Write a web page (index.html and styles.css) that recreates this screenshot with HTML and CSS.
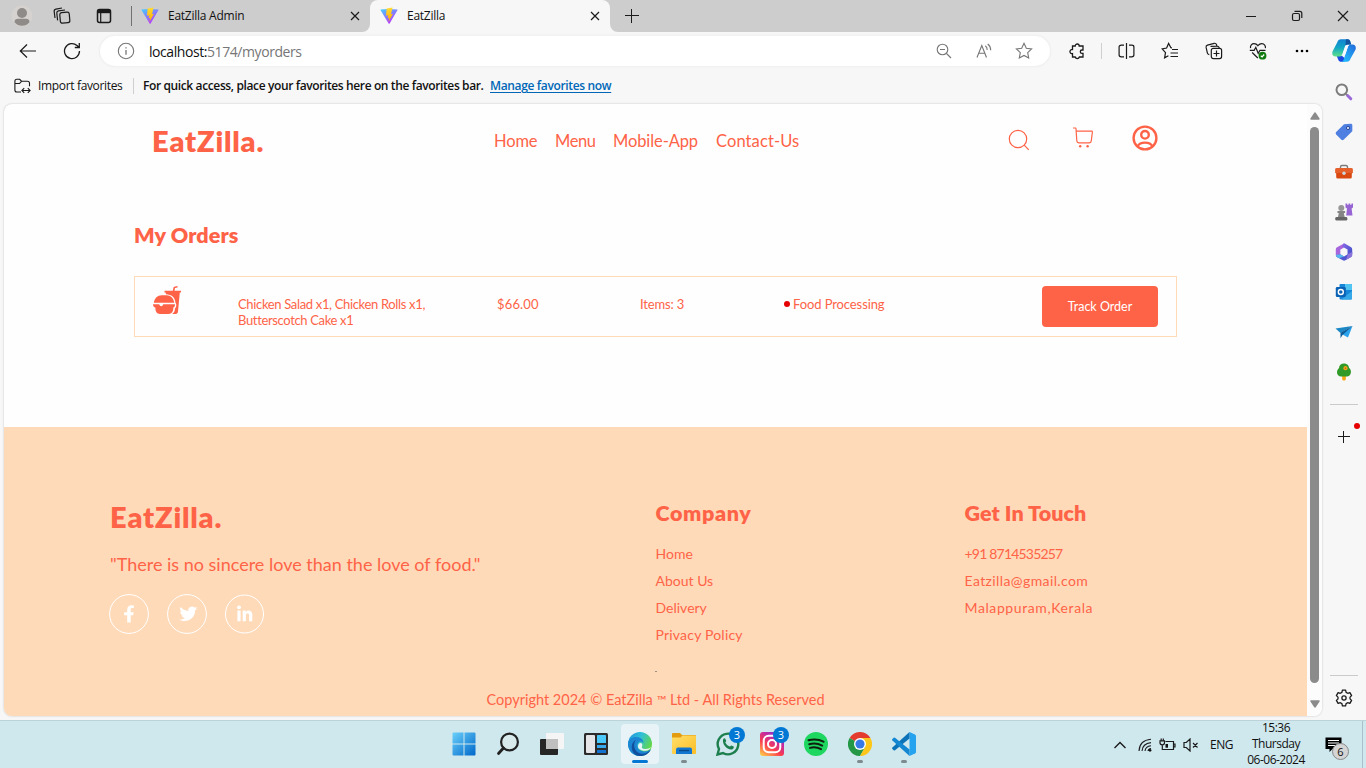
FILE: index.html
```html
<!DOCTYPE html>
<html lang="en">
<head>
<meta charset="utf-8">
<title>EatZilla</title>
<link rel="stylesheet" href="styles.css">
</head>
<body>
<svg class="defs" width="0" height="0">
  <defs>
    <linearGradient id="vb" x1="0" y1="0" x2=".6" y2="1"><stop offset="0" stop-color="#41d1ff"/><stop offset="1" stop-color="#bd34fe"/></linearGradient>
    <linearGradient id="vy" x1="0" y1="0" x2="0" y2="1"><stop offset="0" stop-color="#ffdd35"/><stop offset="1" stop-color="#ffa800"/></linearGradient>
    <linearGradient id="win" x1="0" y1="0" x2="1" y2="1"><stop offset="0" stop-color="#6ad0fb"/><stop offset="1" stop-color="#0067c9"/></linearGradient>
    <linearGradient id="cpa" x1="0" y1="0" x2="0" y2="1"><stop offset="0" stop-color="#1183d3"/><stop offset=".5" stop-color="#12a7c4"/><stop offset="1" stop-color="#5fe08a"/></linearGradient>
    <linearGradient id="cpb" x1="1" y1="0" x2="0" y2="1"><stop offset="0" stop-color="#2168d8"/><stop offset=".6" stop-color="#23a3f3"/><stop offset="1" stop-color="#20c0ff"/></linearGradient>
    <linearGradient id="ig" x1="0.1" y1="1" x2=".8" y2="0"><stop offset="0" stop-color="#ffc94a"/><stop offset=".4" stop-color="#fb3d4e"/><stop offset=".7" stop-color="#c32aa3"/><stop offset="1" stop-color="#6a3be0"/></linearGradient>
    <linearGradient id="edg" x1="0" y1="0" x2="1" y2=".5"><stop offset="0" stop-color="#1c8fdc"/><stop offset=".5" stop-color="#2fc0d8"/><stop offset="1" stop-color="#63d845"/></linearGradient>
    <linearGradient id="fold" x1="0" y1="0" x2="1" y2="1"><stop offset="0" stop-color="#ffdf6b"/><stop offset="1" stop-color="#fbbd25"/></linearGradient>
    <linearGradient id="m1" x1="0" y1="0" x2="1" y2="1"><stop offset="0" stop-color="#8a6be8"/><stop offset="1" stop-color="#3a4bc4"/></linearGradient>
    <symbol id="vite" viewBox="0 0 18 18"><path d="M.8 2.600 8.200 2l9 .6a.5.5 0 0 1 .2.7L9.600 16.600a.6.6 0 0 1-1 0L.6 3.200a.4.4 0 0 1 .2-.6z" fill="url(#vb)"/><path d="M12.600.400 6.600 1.500l-.6 7.200 2.200-.4-.6 3 1.600-.3-.8 4 4.600-8.200-2 .4z" fill="url(#vy)"/></symbol>
  </defs>
</svg>

<header class="tabs">
  <div class="tabs-left">
    <svg width="22" height="22" viewBox="0 0 22 22"><circle cx="11" cy="11" r="10.600" fill="#d5d2cf"/><circle cx="11" cy="8" r="5" fill="#8e8b88"/><path d="M3.500 17.300c0-2.800 1.500-3.500 3.500-3.500h8c2 0 3.500.7 3.500 3.500-2 2.500-4.500 3.500-7.500 3.500s-5.500-1-7.500-3.500z" fill="#8e8b88"/></svg>
    <svg width="18" height="18" viewBox="0 0 18 18" class="ln"><rect x="7" y="5.500" width="9.500" height="10.500" rx="2" transform="rotate(-5 11 10)"/><path d="M4.600 13.400 3.800 6c-.1-1.200.5-2 1.700-2.200L12 3M2 11 1.200 4.600C1 3.400 1.700 2.500 3 2.200L9 1"/></svg>
    <svg width="16" height="16" viewBox="0 0 16 16" class="ln"><rect x="1.500" y="1.500" width="13" height="13" rx="2" stroke-width="1.500"/><path d="M1.500 3.500h13" stroke-width="3.400"/><path d="M4.700 5v9"/></svg>
    <i class="bar"></i>
  </div>
  <div class="tab old"><svg width="18" height="18"><use href="#vite"/></svg><span>EatZilla Admin</span><svg width="10" height="10" viewBox="0 0 10 10" class="ln x"><path d="m1 1 8 8m0-8L1 9"/></svg></div>
  <div class="tab on"><svg width="18" height="18"><use href="#vite"/></svg><span>EatZilla</span><svg width="10" height="10" viewBox="0 0 10 10" class="ln x"><path d="m1 1 8 8m0-8L1 9"/></svg></div>
  <div class="rest"><svg width="14" height="14" viewBox="0 0 14 14" class="ln crisp"><path d="M6.500 0v14M0 6.500h14"/></svg>
    <div class="wins">
      <svg width="46" height="12" viewBox="0 0 46 12" class="ln"><path d="M18 6.500h10" stroke-width="1"/></svg>
      <svg width="46" height="12" viewBox="0 0 46 12" class="ln"><rect x="18.500" y="3.500" width="7" height="7" rx="1.500"/><path d="M20.500 1.300h5.300c1.200 0 2 .8 2 2V8"/></svg>
      <svg width="46" height="12" viewBox="0 0 46 12" class="ln"><path d="m18 1 10 10m0-10L18 11"/></svg>
    </div>
  </div>
</header>

<div class="middle">
  <div class="left">
    <div class="toolbar">
      <div class="c44"><svg width="18" height="16" viewBox="0 0 18 16" class="ln"><path d="M17 8H1.500M8 1.500 1.300 8 8 14.500"/></svg></div>
      <div class="c44"><svg width="18" height="18" viewBox="0 0 18 18" class="ln"><path d="M16.500 9A7.500 7.500 0 1 1 14 3.500L16 5.300M16.300 1v4.500h-4.500" stroke-width="1.300"/></svg></div>
      <div class="url">
        <svg width="18" height="18" viewBox="0 0 18 18" class="gr"><circle cx="9" cy="9" r="7.700"/><path d="M9 8v4.700M9 5.200v1.300" stroke-width="1.300"/></svg>
        <p class="addr"><b>localhost:</b>5174/myorders</p>
        <div class="c40"><svg width="16" height="16" viewBox="0 0 16 16" class="gr"><circle cx="6.500" cy="6.500" r="5.300"/><path d="M4 6.500h5M10.500 10.500 15 15"/></svg></div>
        <div class="c40"><svg width="17" height="16" viewBox="0 0 17 16" class="gr"><path d="M1 14.500 5.800 2.500l4.700 12M2.800 10.300h6M9.300 2.700c1.300 1 1.900 2.400 1.900 4.300M11.700 1c2 1.500 3 3.500 3 6.200"/></svg></div>
        <div class="c40"><svg width="18" height="18" viewBox="0 0 18 18" class="gr"><path d="m9 1.300 2.300 4.900 5.300.7-3.900 3.700 1 5.400L9 13.400 4.300 16l1-5.400L1.400 6.900l5.300-.7z"/></svg></div>
      </div>
      <div class="c44"><svg width="18" height="18" viewBox="0 0 18 18" class="ln"><path d="M4.500 4h2.700a2 2 0 1 1 4 0H15v4h-1a1.700 1.700 0 0 0 0 3.400h1V15h-3.600a2.200 2.200 0 0 1-4.200 0H4.500v-3.400A2.100 2.100 0 1 1 4.500 7.500z" stroke-width="1.300"/></svg></div>
      <i class="vsep"></i>
      <div class="c44"><svg width="17" height="16" viewBox="0 0 17 16" class="ln"><path d="M8.500 0v16M6 2.200H3.300c-1.500 0-2.200.7-2.200 1.700v8.200c0 1 .7 1.700 2.200 1.700H6M11 2.200h2.700c1.500 0 2.200.7 2.200 1.700v8.200c0 1-.7 1.700-2.200 1.700H11"/></svg></div>
      <div class="c44"><svg width="18" height="18" viewBox="0 0 18 18" class="ln"><path d="M11 5.800 9.900 5.700 7.600 1.400 5.600 6 1.200 6.900l3.300 3.700-.9 5.300 3.800-2.100M11 7.500h6M9.500 11H17M9.500 14.500H17"/></svg></div>
      <div class="c44"><svg width="18" height="18" viewBox="0 0 18 18" class="ln"><rect x="6.300" y="6.300" width="10.300" height="10.300" rx="2"/><path d="M11.500 8.500v6M8.500 11.500h6M4.300 12.600c-1-.1-1.600-.5-1.900-1.500L1.100 5.400C.9 4.200 1.400 3.400 2.500 3.100l6.700-1.800c1.200-.2 2 .3 2.300 1.400l.4 1.500M5.500 4.300l6.400-.1c1.500 0 2.200.6 2.400 2"/></svg></div>
      <div class="c44"><svg width="18" height="18" viewBox="0 0 18 18" class="ln"><path d="M1.500 6.200C1 3.500 3 1.700 5 1.700c1.700 0 3 .8 3.900 2 1-1.200 2.300-2 4-2 2.300 0 4 2 3.500 4.500M.8 8.300h4.400l1.600-3 2.400 6L11 8.300h5.500M3.200 10.500 8.800 16"/><circle cx="13.500" cy="13.700" r="3.900" fill="#107c10" stroke="none"/><path d="m11.800 13.800 1.300 1.200 2.100-2.500" stroke="#fff"/></svg></div>
      <div class="c44"><svg width="14" height="4" viewBox="0 0 14 4"><circle cx="2" cy="2" r="1.300"/><circle cx="7" cy="2" r="1.300"/><circle cx="12" cy="2" r="1.300"/></svg></div>
    </div>
    <div class="favs">
      <svg width="17" height="16" viewBox="0 0 17 16" class="ln"><path d="M7 14H2.800c-1.200 0-1.900-.8-1.900-2V3.300c0-1.300.7-2 1.900-2h2.900l1.800 1.900h6c1.200 0 2 .8 2 2v3M1 5.500h4.500l2-2.200M8.500 12.500h7.500M10.200 10.200l-2.300 2.300 2.300 2.300M13.800 10.200l2.300 2.300-2.300 2.300" stroke-width="1.100"/></svg>
      <span class="imp">Import favorites</span><i class="vsep"></i>
      <span class="quick">For quick access, place your favorites here on the favorites bar.</span>
      <a class="manage">Manage favorites now</a>
    </div>

    <div class="view">
      <div class="page">
        <nav class="nav">
          <h1 class="logo">EatZilla.</h1>
          <ul class="menu"><li class="m1">Home</li><li class="m2">Menu</li><li class="m3">Mobile-App</li><li class="m4">Contact-Us</li></ul>
          <div class="acts">
            <svg width="22" height="22" viewBox="0 0 22 22" class="tm"><circle cx="10" cy="10" r="8.700"/><path d="m16.200 16.200 4.600 4.700"/></svg>
            <svg width="22" height="22" viewBox="0 0 22 22" class="tm"><path d="M1 1h2.300c.5 0 .7.300.7.800l.8 12c.1 1.300.9 2 2 2h10.500c1.200 0 1.900-.7 2-2L20.400 5c0-.5-.3-.8-.8-.8H4.200"/><circle cx="8.200" cy="19.300" r="1.200" fill="#ff6347" stroke="none"/><circle cx="15.600" cy="19.300" r="1.200" fill="#ff6347" stroke="none"/></svg>
            <svg width="26" height="26" viewBox="0 0 26 26" class="tm th"><circle cx="13" cy="13" r="11.400"/><circle cx="13" cy="9.800" r="3.800"/><path d="M5.500 21.400c1.300-2.500 4-3.800 7.500-3.800s6.200 1.300 7.500 3.800"/></svg>
          </div>
        </nav>
        <h2 class="title">My Orders</h2>
        <section class="order">
          <svg width="28" height="28" viewBox="0 0 28 28" fill="#ff6347"><path d="M11.500 4.700h8.300L20.300 2.200C20.500 1 21 .5 22 .4L24.500 0v1.500l-2.500.5-.5 2.700H28v1.700h-1.200L25 25.600c-.2 1.600-.9 2.400-2.300 2.400h-3.500c2-1.400 2.900-3.200 2.700-5.400 1.600-1.500 2-4 .5-6C22.200 11.500 18.500 8.500 13 8.300l-.4-1.900h-1.100z"/><path d="M.8 16.800C1.500 12.300 4.500 9.300 8.500 9.300h5.200c4 0 7 3 7.600 7.500zM0 18.200h6.200c.7 2.600 3.400 2.600 4.100 0H22c0 1.700-.6 2.900-1.700 3.400.1 3.900-1.500 6.400-4.700 6.400H7c-3.200 0-4.700-2.500-4.600-6.400C.9 21.100 0 19.900 0 18.200z"/></svg>
          <p class="items"><span class="i1">Chicken Salad x1, Chicken Rolls x1,</span><br><span class="i2">Butterscotch Cake x1</span></p>
          <p class="price">$66.00</p>
          <p class="count">Items: 3</p>
          <p class="status"><i></i>Food Processing</p>
          <button class="track">Track Order</button>
        </section>
        <footer class="foot">
          <div class="cols">
            <div>
              <h1 class="logo">EatZilla.</h1>
              <p class="quote">"There is no sincere love than the love of food."</p>
              <div class="soc">
                <svg width="40" height="40" viewBox="0 0 40 40"><circle cx="20" cy="20" r="19.400"/><path d="M18.200 28.500v-7.300h-3v-3h3v-2.500c0-3 1.700-4.500 4.300-4.500l2.400.2v2.700h-1.500c-1.300 0-1.700.7-1.700 1.700v2.400h3l-.5 3h-2.500v7.300z"/></svg>
                <svg width="40" height="40" viewBox="0 0 40 40"><circle cx="20" cy="20" r="19.400"/><path d="M30.500 14.200c-.6.300-1.300.5-2 .6.700-.5 1.300-1.200 1.600-2-.7.400-1.500.7-2.300.9a3.800 3.800 0 0 0-6.500 3.400c-3.100-.2-5.900-1.700-7.700-4-1 1.700-.5 3.900 1.200 5-.6 0-1.200-.2-1.700-.5 0 1.800 1.200 3.300 2.900 3.700-.5.100-1.100.1-1.600 0 .5 1.500 1.800 2.600 3.500 2.600a7.600 7.600 0 0 1-5.600 1.600c6.800 4.200 15.900-.3 15.800-9.200.9-.6 1.800-1.300 2.400-2.100z"/></svg>
                <svg width="39" height="40" viewBox="0 0 39 40"><circle cx="19.500" cy="20" r="19"/><circle cx="14" cy="13.300" r="1.900"/><path d="M12.400 16.500h3.200v10.700h-3.200zM17.700 16.500h3v1.500c1.700-2.800 6.600-2 6.600 2.600v6.600h-3.200v-5.700c0-3.200-3.200-3-3.200 0v5.700h-3.200z"/></svg>
              </div>
            </div>
            <div><h2 class="ch ch1">Company</h2><ul class="li"><li>Home</li><li>About Us</li><li>Delivery</li><li class="pp">Privacy Policy</li></ul></div>
            <div><h2 class="ch">Get In Touch</h2><ul class="li"><li class="ph">+91 8714535257</li><li class="em">Eatzilla@gmail.com</li><li class="ml">Malappuram,Kerala</li></ul></div>
          </div>
          <hr class="dot">
          <p class="copy">Copyright 2024 © EatZilla <sup>™</sup> Ltd - All Rights Reserved</p>
        </footer>
      </div>
      <div class="scroll">
        <svg width="10" height="8" viewBox="0 0 10 8" fill="#8b8b8b"><path d="M5 .3c.4 0 .6.200.8.500L9.600 6.500c.3.600 0 1.200-.7 1.200H1.100c-.7 0-1-.6-.7-1.200L4.200.800C4.400.500 4.600.300 5 .300z"/></svg>
        <i class="thumb"></i>
        <svg width="10" height="8" viewBox="0 0 10 8" fill="#8b8b8b"><path d="M5 7.700c.4 0 .6-.2.800-.5l3.800-5.700c.3-.6 0-1.200-.7-1.200H1.100c-.7 0-1 .6-.7 1.200l3.800 5.700c.2.300.4.500.8.500z"/></svg>
      </div>
    </div>
  </div>

  <aside class="side">
    <div class="cop"><svg width="24" height="23" viewBox="0 0 24 23"><path d="M9.500 16.500 6 15H0l4.500 1.500 1.800 4.200c.6 1.500 1.500 2 3 2h2.500l3.500-1.500z" fill="#1b4ae0"/><path d="M5.200 3.500C6 1 7 .3 9 .3h6.500c1.500 0 2.300.7 2.700 2l1 3.300h-2.800c-1.800 0-2.700.7-3.300 2.400l-2.300 7c-.6 1.800-1.300 2.400-3.100 2.400H3.500C.8 17.400-.2 15.300.5 12.600z" fill="url(#cpa)"/><path d="M14 .3h1.500c1.500 0 2.300.7 2.700 2l1 3.300h-2.800c-1.600 0-2.500.5-3.100 1.900z" fill="#14539f"/><path d="M18.600 19.500c-.8 2.500-1.800 3.200-3.800 3.200H9.300c1.400 0 2-.9 2.500-2.400l4-12.200c.6-1.800 1.500-2.500 3.200-2.500h1.500c2.700 0 3.800 2.100 3.100 4.800z" fill="url(#cpb)"/><path d="m13.300 6.500 2.200-.6h1.500l-1 1.500-2.600 7.600-3.300 1.300-1.500.6 1.700-1.700z" fill="#f7fbff"/></svg></div>
    <div class="sc"><svg width="18" height="18" viewBox="0 0 18 18" fill="none"><circle cx="6.800" cy="6.800" r="5.300" stroke="#7d7d7d" stroke-width="2"/><path d="m11 11 2 2" stroke="#7d7d7d" stroke-width="2"/><path d="m12.800 12.800 3 3" stroke="#9a68d8" stroke-width="3" stroke-linecap="round"/></svg></div>
    <div class="sc"><svg width="18" height="18" viewBox="0 0 18 18"><path d="M9 1.300 15.700.8c1 0 1.600.500 1.600 1.500v6L8.600 16.800c-.7.600-1.500.6-2.200 0L1.200 11.400c-.7-.8-.7-1.500 0-2.300z" fill="#4f7fe0"/><circle cx="13" cy="5" r="1.600" fill="#dbe7ff" stroke="#2b4c9c"/></svg></div>
    <div class="sc"><svg width="18" height="18" viewBox="0 0 18 18"><path d="M5.500 6V4c0-1 .5-1.500 1.500-1.500h4c1 0 1.500.5 1.500 1.500v2" fill="none" stroke="#7b7b7b" stroke-width="1.400"/><path d="M.5 5.500h17V10l-.7.500V14q0 1.500-1.500 1.500H2.700Q1.200 15.500 1.200 14v-3.500L.5 10z" fill="#d9480f"/><path d="M.3 10V6.500Q.3 5 1.800 5h14.400q1.500 0 1.500 1.500V10z" fill="#e5602a"/><circle cx="9" cy="10.300" r="1.700" fill="#ccd8de"/></svg></div>
    <div class="sc"><svg width="18" height="18" viewBox="0 0 18 18"><path d="M10.500.500h1.700v1.300h1.400V.500h1.600v1.300h1.300V.500H18v4l-1.400 1 .9 7h-6.300L12 5.500l-1.500-1z" fill="#9765d3"/><circle cx="6.300" cy="5" r="3" fill="#969696"/><path d="M2.500 8h7.600v2H8.800l.9 4H3l.8-4H2.500z" fill="#858585"/><rect x=".3" y="14" width="12" height="3.500" rx="1.300" fill="#666"/></svg></div>
    <div class="sc"><svg width="18" height="18" viewBox="0 0 18 18"><path d="M9 .500 2.500 4C1.300 4.700.8 5.300.8 6.600v5.500c0 .8.300 1.300.9 1.700L5.300 11.500V6.700L9 4.500l2-3z" fill="#a766dc"/><path d="m8.300.800c.6-.4 1.200-.4 1.900 0l5.500 3.200c1.100.7 1.500 1.300 1.500 2.600v3.700L12.800 12V6.700L7.300 3.500z" fill="url(#m1)"/><path d="M5.300 11.300 9 13.500l3.700-2.200V6.700l4.500 2.500v2.500c0 1.300-.4 1.900-1.500 2.600l-5.300 3c-.9.500-1.700.5-2.600 0L2.200 14.200c-.8-.4-1.200-1-1.300-1.800z" fill="#5158cf"/><path d="M.9 12c0 .9.500 1.700 1.300 2.200l2 1.100L9 13.500l-3.700-2.200z" fill="#56b8ee"/><path d="M12.700 11.300 17.200 9v2.700c0 1.300-.4 1.900-1.500 2.600l-4.500 2.500z" fill="#8c72db"/><path d="M9 5.600l3 1.700v3.500L9 12.500l-3-1.700V7.300z" fill="#f7f7f7"/></svg></div>
    <div class="sc"><svg width="18" height="18" viewBox="0 0 18 18"><rect x="4.500" y="1" width="12.500" height="15.500" rx="1" fill="#1686d9"/><path d="M10 1h6q1 0 1 1v5h-7z" fill="#50c5f2"/><path d="M17 8v7.500q0 1-1 1H6.500l6-5z" fill="#35a8e8"/><rect x=".8" y="4" width="10" height="10" rx="1.200" fill="#0b62b5"/><circle cx="5.800" cy="9" r="2.500" fill="none" stroke="#fff" stroke-width="1.400"/></svg></div>
    <div class="sc"><svg width="18" height="18" viewBox="0 0 18 18"><path d="M.5 5.500 17.500 3 5.500 10z" fill="#1b87c5"/><path d="M17.500 3 13 14.500 7 11.300z" fill="#2ba3ec"/><path d="M17.500 3 5.500 9.700v5.500l2-3.300z" fill="#0e5c99"/></svg></div>
    <div class="sc"><svg width="18" height="18" viewBox="0 0 18 18"><path d="M7.200 12h3.600v4q0 1.500-1.800 1.500T7.200 16z" fill="#f5a614"/><path d="M9 .500c3 0 5 2.200 5 4.300 1.500 1.200 2.200 3 1.900 4.700-.3 2.500-2 3.900-4 3.900H6.200c-2.500 0-4.200-1.700-4.200-4 0-1.800.8-3.200 2-4.300C4 2.500 6 .500 9 .500z" fill="#2f9a27"/><circle cx="10.500" cy="5.200" r="2.100" fill="#f0a51c"/><circle cx="10.500" cy="5.200" r=".8" fill="#c45a11"/></svg></div>
    <hr class="h1">
    <div class="plus"><svg width="12" height="12" viewBox="0 0 12 12" class="ln crisp"><path d="M5.500 0v12M0 5.500h12"/></svg><i></i></div>
    <hr class="h2">
    <div class="gear"><svg width="18" height="18" viewBox="0 0 18 18" class="ln"><path d="m7.400 1.200-.5 2.200-1.600.9-2.200-.7-1.700 3L3 8.100v1.800l-1.600 1.500 1.700 3 2.200-.7 1.600.9.500 2.200h3.200l.5-2.200 1.600-.9 2.200.7 1.700-3L15 9.900V8.100l1.600-1.500-1.700-3-2.200.7-1.600-.9-.5-2.200z" stroke-width="1.300" stroke-linejoin="round"/><circle cx="9" cy="9" r="2.100" stroke-width="1.300"/></svg></div>
  </aside>
</div>

<footer class="task">
  <div class="apps">
    <div><svg width="24" height="24" viewBox="0 0 24 24" fill="url(#win)"><path d="M.5 1.500q0-1 1-1h10v11H.500zM12.500.500h10q1 0 1 1v10h-11zM.5 12.500h11v11h-10q-1 0-1-1zM12.500 12.500h11v10q0 1-1 1h-10z"/></svg></div>
    <div><svg width="24" height="24" viewBox="0 0 24 24" fill="none" stroke="#222"><circle cx="13.500" cy="10" r="8.400" stroke-width="2.200" fill="#d9eaec"/><path d="m7.500 16-5 5.500" stroke-width="2.800" stroke-linecap="round"/></svg></div>
    <div><svg width="24" height="24" viewBox="0 0 24 24"><rect x="0" y="7" width="18" height="16" rx="1" fill="#262626"/><rect x="6" y="1" width="18" height="16" rx="1" fill="#f5f5f5"/><path d="M6 7h12v10H7q-1 0-1-1z" fill="#bfbfbf"/></svg></div>
    <div><svg width="24" height="24" viewBox="0 0 24 24"><rect y="1" width="24" height="22" rx="1.500" fill="#2b2b2b"/><rect x="2" y="3" width="9" height="18" rx="1" fill="#e5e5e8"/><rect x="13" y="3" width="9" height="8" rx=".6" fill="#4cc9fb"/><rect x="13" y="13" width="9" height="3" fill="#38a9ec"/><rect x="13" y="18" width="9" height="3" fill="#1473d1"/></svg></div>
    <div class="act"><svg width="24" height="24" viewBox="0 0 24 24"><circle cx="12" cy="12" r="12" fill="url(#edg)"/><path d="M0 12c0-5 5-7.500 9-7 4 .4 6.500 3 6.500 6-1-1.300-3-2-4.500-1-3 2-2 7 2 8.700 4 1.700 8-.2 9.800-1.200C21 21.500 17 24 12 24 5 24 0 18.500 0 12z" fill="#1c86d3"/><path d="M8.200 7.700C5 11 5.500 17.500 10 20.500c5 3 10.500 0 12.600-3C20.500 22 16.500 24 12 24 6.500 24 3.500 19 3.700 14.500 4 11 6 8.500 8.200 7.700z" fill="#124f9d"/><path d="M10 14.500c0-1.700 1-3.500 2.500-3.500s2.500 2 1.500 3.500c-.7 1.300.6 2.400 3 2.500 2.500.1 5-.8 6.200-2-1 2.300-3.200 3.800-6 3.800-4 0-7.200-1.800-7.200-4.300z" fill="#e6f3f8"/></svg><i></i></div>
    <div class="run"><svg width="24" height="24" viewBox="0 0 24 24"><path d="M0 2q0-1 1-1h7l2 2h13q1 0 1 1v6H0z" fill="#e39b10"/><path d="M0 5.500h8.500l2-2H23q1 0 1 1V21q0 1-1 1H1q-1 0-1-1z" fill="url(#fold)"/><path d="M4 22v-4.500Q4 15.500 6 15.500h12q2 0 2 2V22z" fill="#1176cf"/><path d="M7 18.500h10" stroke="#0a4b8c" stroke-width="1.400"/></svg><i></i></div>
    <div><svg width="24" height="24" viewBox="0 0 24 24" fill="none"><path d="M1.500 22.500 3 17A10.300 10.300 0 1 1 7 21z" stroke="#1d7f4e" stroke-width="2.400"/><path d="M7.200 7c1-1.300 2-.8 2.300.2l.7 1.600c.2.600-.8 1.200-.9 1.800 1 2 2.400 3.200 4.400 4 .7 0 1-1.300 1.700-1.200l2.200 1.100c.8.500-.2 2.500-1.600 3C11.500 18.500 5.500 12 7.200 7z" fill="#1d7f4e"/></svg><b class="bdg">3</b></div>
    <div><svg width="24" height="24" viewBox="0 0 24 24"><rect width="24" height="24" rx="3" fill="url(#ig)"/><rect x="3.700" y="3.700" width="16.600" height="16.600" rx="5" fill="none" stroke="#fff" stroke-width="2"/><circle cx="12" cy="12" r="4" fill="none" stroke="#fff" stroke-width="2"/></svg><b class="bdg">3</b></div>
    <div><svg width="24" height="24" viewBox="0 0 24 24"><circle cx="12" cy="12" r="12" fill="#1ed760"/><path d="M4.500 8.300c5-1.500 10.500-1 15 1.400M5.200 12.200c4.500-1.200 9-.7 13 1.400M6 15.900c3.800-1 7.500-.6 11 1.300" fill="none" stroke="#10200f" stroke-width="2" stroke-linecap="round"/></svg></div>
    <div class="run"><svg width="24" height="24" viewBox="0 0 24 24"><path d="M12 12 1.600 6A12 12 0 0 1 22.400 6z" fill="#e33b2e"/><path d="M12 12 1.600 6A12 12 0 0 0 12 24l5.200-9z" fill="#249847"/><path d="M22.400 6A12 12 0 0 1 12 24l5.200-9L12 6z" fill="#fcc61b"/><circle cx="12" cy="12" r="6" fill="#fff"/><circle cx="12" cy="12" r="4.600" fill="#3879e8"/></svg><i></i></div>
    <div class="run"><svg width="24" height="24" viewBox="0 0 24 24"><path d="M17.500 0 23 2.500q1 .5 1 1.500v16q0 1-1 1.500L17.500 24z" fill="#25a3ee"/><path d="M17.500 0v6.500L3 18.200q-.7.500-1.300 0L.4 17q-.7-.7 0-1.400z" fill="#0c73b8"/><path d="M17.500 24v-6.500L3 5.800q-.7-.5-1.300 0L.4 7q-.7.700 0 1.400z" fill="#1387d2"/></svg><i></i></div>
  </div>
  <div class="tray">
    <svg width="12" height="8" viewBox="0 0 12 8" class="ln"><path d="m.5 7 5.500-5.500L11.500 7" stroke-width="1.400"/></svg>
    <svg width="14" height="14" viewBox="0 0 14 14" class="ln w"><path d="M1 13C1.300 6.500 5.500 2 13 1.300M4 13c.3-4.500 3.500-7.800 9-8.400M7 13c.3-2.800 2.500-5 6-5.300M10 13c.2-1.300 1.200-2.300 3-2.500" stroke-width="1.100"/><circle cx="12" cy="12.300" r="1.400" fill="#111" stroke="none"/></svg>
    <svg width="17" height="13" viewBox="0 0 17 13" class="ln b"><path d="M6.500 3.500h8V11.500H3.300V7M14.500 6h1.500v3h-1.500M1 2.800h4.500v2c0 1.400-.7 2-2.200 2S1 6.200 1 4.800zM2.200 2.800V.500M4.300 2.800V.500"/><path d="M6.500 6v3.700h2.500V6z" fill="#111" stroke="none"/></svg>
    <svg width="16" height="14" viewBox="0 0 16 14" class="ln v"><path d="M1 4.500h2.300L7 1v12L3.300 9.500H1zM10 5l4.500 4.500M14.500 5 10 9.500"/></svg>
    <span class="eng">ENG</span>
    <p class="clock">15:36<br>Thursday<br>06-06-2024</p>
    <div class="note"><svg width="17" height="15" viewBox="0 0 17 15"><path d="M.5.500h16v11.500H7.500L4.500 15v-3h-4z" fill="#000"/><path d="M3 3.500h11M3 6h11M3 8.500h11" stroke="#fff"/></svg><b>6</b></div>
    <i class="desk"></i>
  </div>
</footer>
</body>
</html>
```
FILE: styles.css
```css
* { box-sizing: border-box; margin: 0; padding: 0; }
body {
  width: 1366px; height: 768px; overflow: hidden;
  display: flex; flex-direction: column;
  font-family: "Open Sans", "Noto Sans", sans-serif;
  background: #f7f7f7; color: #111;
}
svg { display: block; flex: none; }
.defs { position: absolute; }
ul { list-style: none; }
.ln { fill: none; stroke: #1b1b1b; stroke-width: 1.2; }
.gr { fill: none; stroke: #767676; stroke-width: 1.1; }
.crisp { stroke-width: 1; }

/* title bar */
.tabs { height: 32px; display: flex; background: #f7f7f7; font-size: 12px; }
.tabs-left { width: 132px; background: #cdcdcd; display: flex; align-items: center; padding-left: 11px; }
.tabs-left svg:nth-child(2) { margin-left: 20px; }
.tabs-left svg:nth-child(3) { margin-left: 25px; }
.bar { width: 1px; height: 20px; background: #707070; margin-left: 19px; }
.tab { display: flex; align-items: center; padding-left: 9px; width: 238px; }
.tab span { margin-left: 9px; letter-spacing: -.25px; line-height: 16px; }
.tab .x { margin-left: auto; margin-right: 10px; }
.old { background: #cdcdcd; border-radius: 0 0 8px 0; }
.on { width: 240px; padding-left: 10px; border-radius: 8px 8px 0 0; background: #f7f7f7; box-shadow: 0 -8px 0 #cdcdcd; }
.rest { flex: 1; background: #cdcdcd; border-radius: 0 0 0 8px; display: flex; align-items: center; padding-left: 15px; }
.wins { margin-left: auto; display: flex; }

.middle { height: 688px; display: flex; }
.left { width: 1322px; }
.toolbar { height: 38px; display: flex; align-items: center; padding-left: 6px; }
.c44 { width: 44px; flex: none; display: grid; place-items: center; }
.c40 { width: 40px; flex: none; display: grid; place-items: center; }
.url { width: 950px; flex: none; height: 30px; margin: 0 5px 0 6px; border-radius: 15px; background: #fff; display: flex; align-items: center; padding: 0 6px 0 17px; box-shadow: 0 0 3px #e4e4e4; }
.addr { flex: 1; margin-left: 14px; font-size: 14px; color: #767676; letter-spacing: -.43px; }
.addr b { font-weight: 400; color: #111; }
.vsep { width: 1px; height: 16px; background: #cfcfcf; margin: 0 2px; flex: none; }
.favs { height: 33px; display: flex; align-items: center; padding: 0 0 2px 14px; font-size: 12px; white-space: nowrap; }
.imp { margin-left: 7px; width: 95px; letter-spacing: -.34px; }
.favs .vsep { margin: 0 9px 0 0; }
.quick { width: 347px; font-weight: 600; letter-spacing: -.38px; }
.manage { color: #0067b8; text-decoration: underline; text-underline-offset: 2px; font-weight: 600; letter-spacing: -.35px; }

/* browser viewport */
.view { margin: 1px 0 0 4px; width: 1318px; height: 612px; display: flex; background: #fefefe; border-radius: 8px; overflow: hidden; box-shadow: 0 0 2px #bbb; }
.page { width: 1303px; font-family: Lato, sans-serif; color: #ff6347; }
.scroll { width: 15px; background: #fcfcfc; display: flex; flex-direction: column; align-items: center; padding-top: 8px; }
.thumb { width: 9px; height: 556px; border-radius: 5px; background: #8b8b8b; margin: 7px 0 17px; }

.tm { fill: none; stroke: #ff6347; stroke-width: 1.2; }
.th { stroke-width: 2.4; }
.nav { height: 74px; display: flex; align-items: center; padding: 0 0 1px 148px; }
.logo { font-size: 29px; font-weight: 800; line-height: 36px; letter-spacing: .8px; width: 342px; }
.menu { display: flex; gap: 18px; width: 514px; font-size: 16.500px; white-space: nowrap; }
.m1 { width: 43px; letter-spacing: -.15px; } .m2 { width: 40px; letter-spacing: -.4px; } .m3 { width: 85px; letter-spacing: -.1px; } .m4 { width: 84px; letter-spacing: .1px; }
.acts { display: flex; align-items: center; gap: 42px; height: 26px; margin-bottom: 5px; }
.acts svg:first-child { margin-top: 4px; }
.acts svg:last-child { margin-left: -4px; }
.title { margin: 43px 0 0 130px; font-size: 21.500px; line-height: 28px; font-weight: 800; letter-spacing: .1px; }
.order { margin: 27px 0 0 130px; width: 1043px; height: 61px; border: 1px solid #ffdab9; display: flex; align-items: flex-start; padding: 9px 18px 0 18px; font-size: 13px; line-height: 16px; }
.order p { margin-top: 10px; }
.items { margin-left: 57px; width: 259px; }
.i1 { letter-spacing: -.34px; } .i2 { letter-spacing: -.35px; }
.price { width: 143px; letter-spacing: .15px; }
.count { width: 144px; letter-spacing: -.15px; }
.status { width: 258px; display: flex; align-items: center; gap: 3px; letter-spacing: -.1px; }
.status i { width: 6px; height: 6px; border-radius: 50%; background: #e60000; }
.track { width: 116px; height: 41px; border: 0; border-radius: 4px; background: #ff6347; color: #fff; font: 12.500px Lato, sans-serif; }

.foot { margin-top: 90px; height: 290px; background: #ffdab9; padding-top: 72px; }
.cols { height: 150px; display: grid; grid-template-columns: 545px 309px 1fr; padding-left: 106px; }
.quote { margin-top: 17px; font-size: 18px; line-height: 24px; }
.soc { display: flex; gap: 18px; margin: 18px 0 0 -1px; }
.soc svg { fill: #fff; }
.soc circle:first-child { fill: none; stroke: #fff; stroke-width: 1; }
.ch { font-size: 21.500px; line-height: 28px; font-weight: 800; margin-bottom: 13px; margin-left: .5px; letter-spacing: .06px; }
.ch1 { letter-spacing: .6px; }
.li { font-size: 14px; line-height: 27px; margin-left: .5px; }
.pp { letter-spacing: .2px; } .ph { letter-spacing: -.8px; } .em { letter-spacing: .4px; } .ml { letter-spacing: .6px; }
.dot { width: 2px; height: 1px; border: 0; background: #a08c80; margin: 22px auto 0; }
.copy { margin-top: 18px; line-height: 20px; font-size: 14.500px; text-align: center; }
.copy sup { font-size: 13px; line-height: 0; vertical-align: 0; }

/* sidebar */
.side { width: 44px; display: flex; flex-direction: column; align-items: center; }
.cop { height: 40px; padding-top: 7px; }
.sc { height: 40px; display: grid; place-items: center; }
.side hr { width: 28px; height: 1px; border: 0; background: #cbcbcb; }
.h1 { margin-top: 12px; }
.plus { position: relative; margin-top: 26px; }
.plus i { position: absolute; left: 16px; top: -8px; width: 6px; height: 6px; border-radius: 50%; background: #e60000; }
.h2 { margin-top: 232px; }
.gear { margin-top: 13px; }

/* taskbar */
.task { height: 48px; background: #cfe8ee; border-top: 1px solid #bcd3da; display: flex; }
.apps { display: flex; margin-left: 442px; width: 678px; padding-top: 3px; }
.apps > div { width: 44px; height: 40px; display: grid; place-items: center; position: relative; }
.apps i { position: absolute; left: 19px; top: 36px; width: 6px; height: 3px; border-radius: 2px; background: #7d8a8e; }
.apps .act { width: 38px; margin: 0 3px; background: #e8f3f7; border-radius: 4px; }
.apps .act i { left: 11px; width: 16px; background: #0078d4; }
.bdg { position: absolute; left: 23px; top: 3px; width: 16px; height: 16px; border-radius: 50%; background: #0078d4; color: #fff; font-size: 11px; font-weight: 400; line-height: 16px; text-align: center; }
.tray { flex: 1; display: flex; align-items: center; margin-left: -6px; font-size: 12px; }
.w { margin-left: 12px; } .b { margin-left: 7px; } .v { margin-left: 7px; }
.eng { width: 24px; margin-left: 11px; letter-spacing: -.5px; }
.clock { margin-bottom: 2px; width: 84px; text-align: center; line-height: 16px; letter-spacing: -.5px; }
.note { position: relative; margin-left: 7px; }
.note b { position: absolute; left: 7px; top: 6px; width: 17px; height: 17px; border-radius: 50%; background: #d4d4d4; border: 1px solid #888; font-size: 11px; line-height: 15px; font-weight: 400; text-align: center; }
.desk { width: 1px; height: 48px; background: #a9c2ca; margin-left: 20px; }
```
